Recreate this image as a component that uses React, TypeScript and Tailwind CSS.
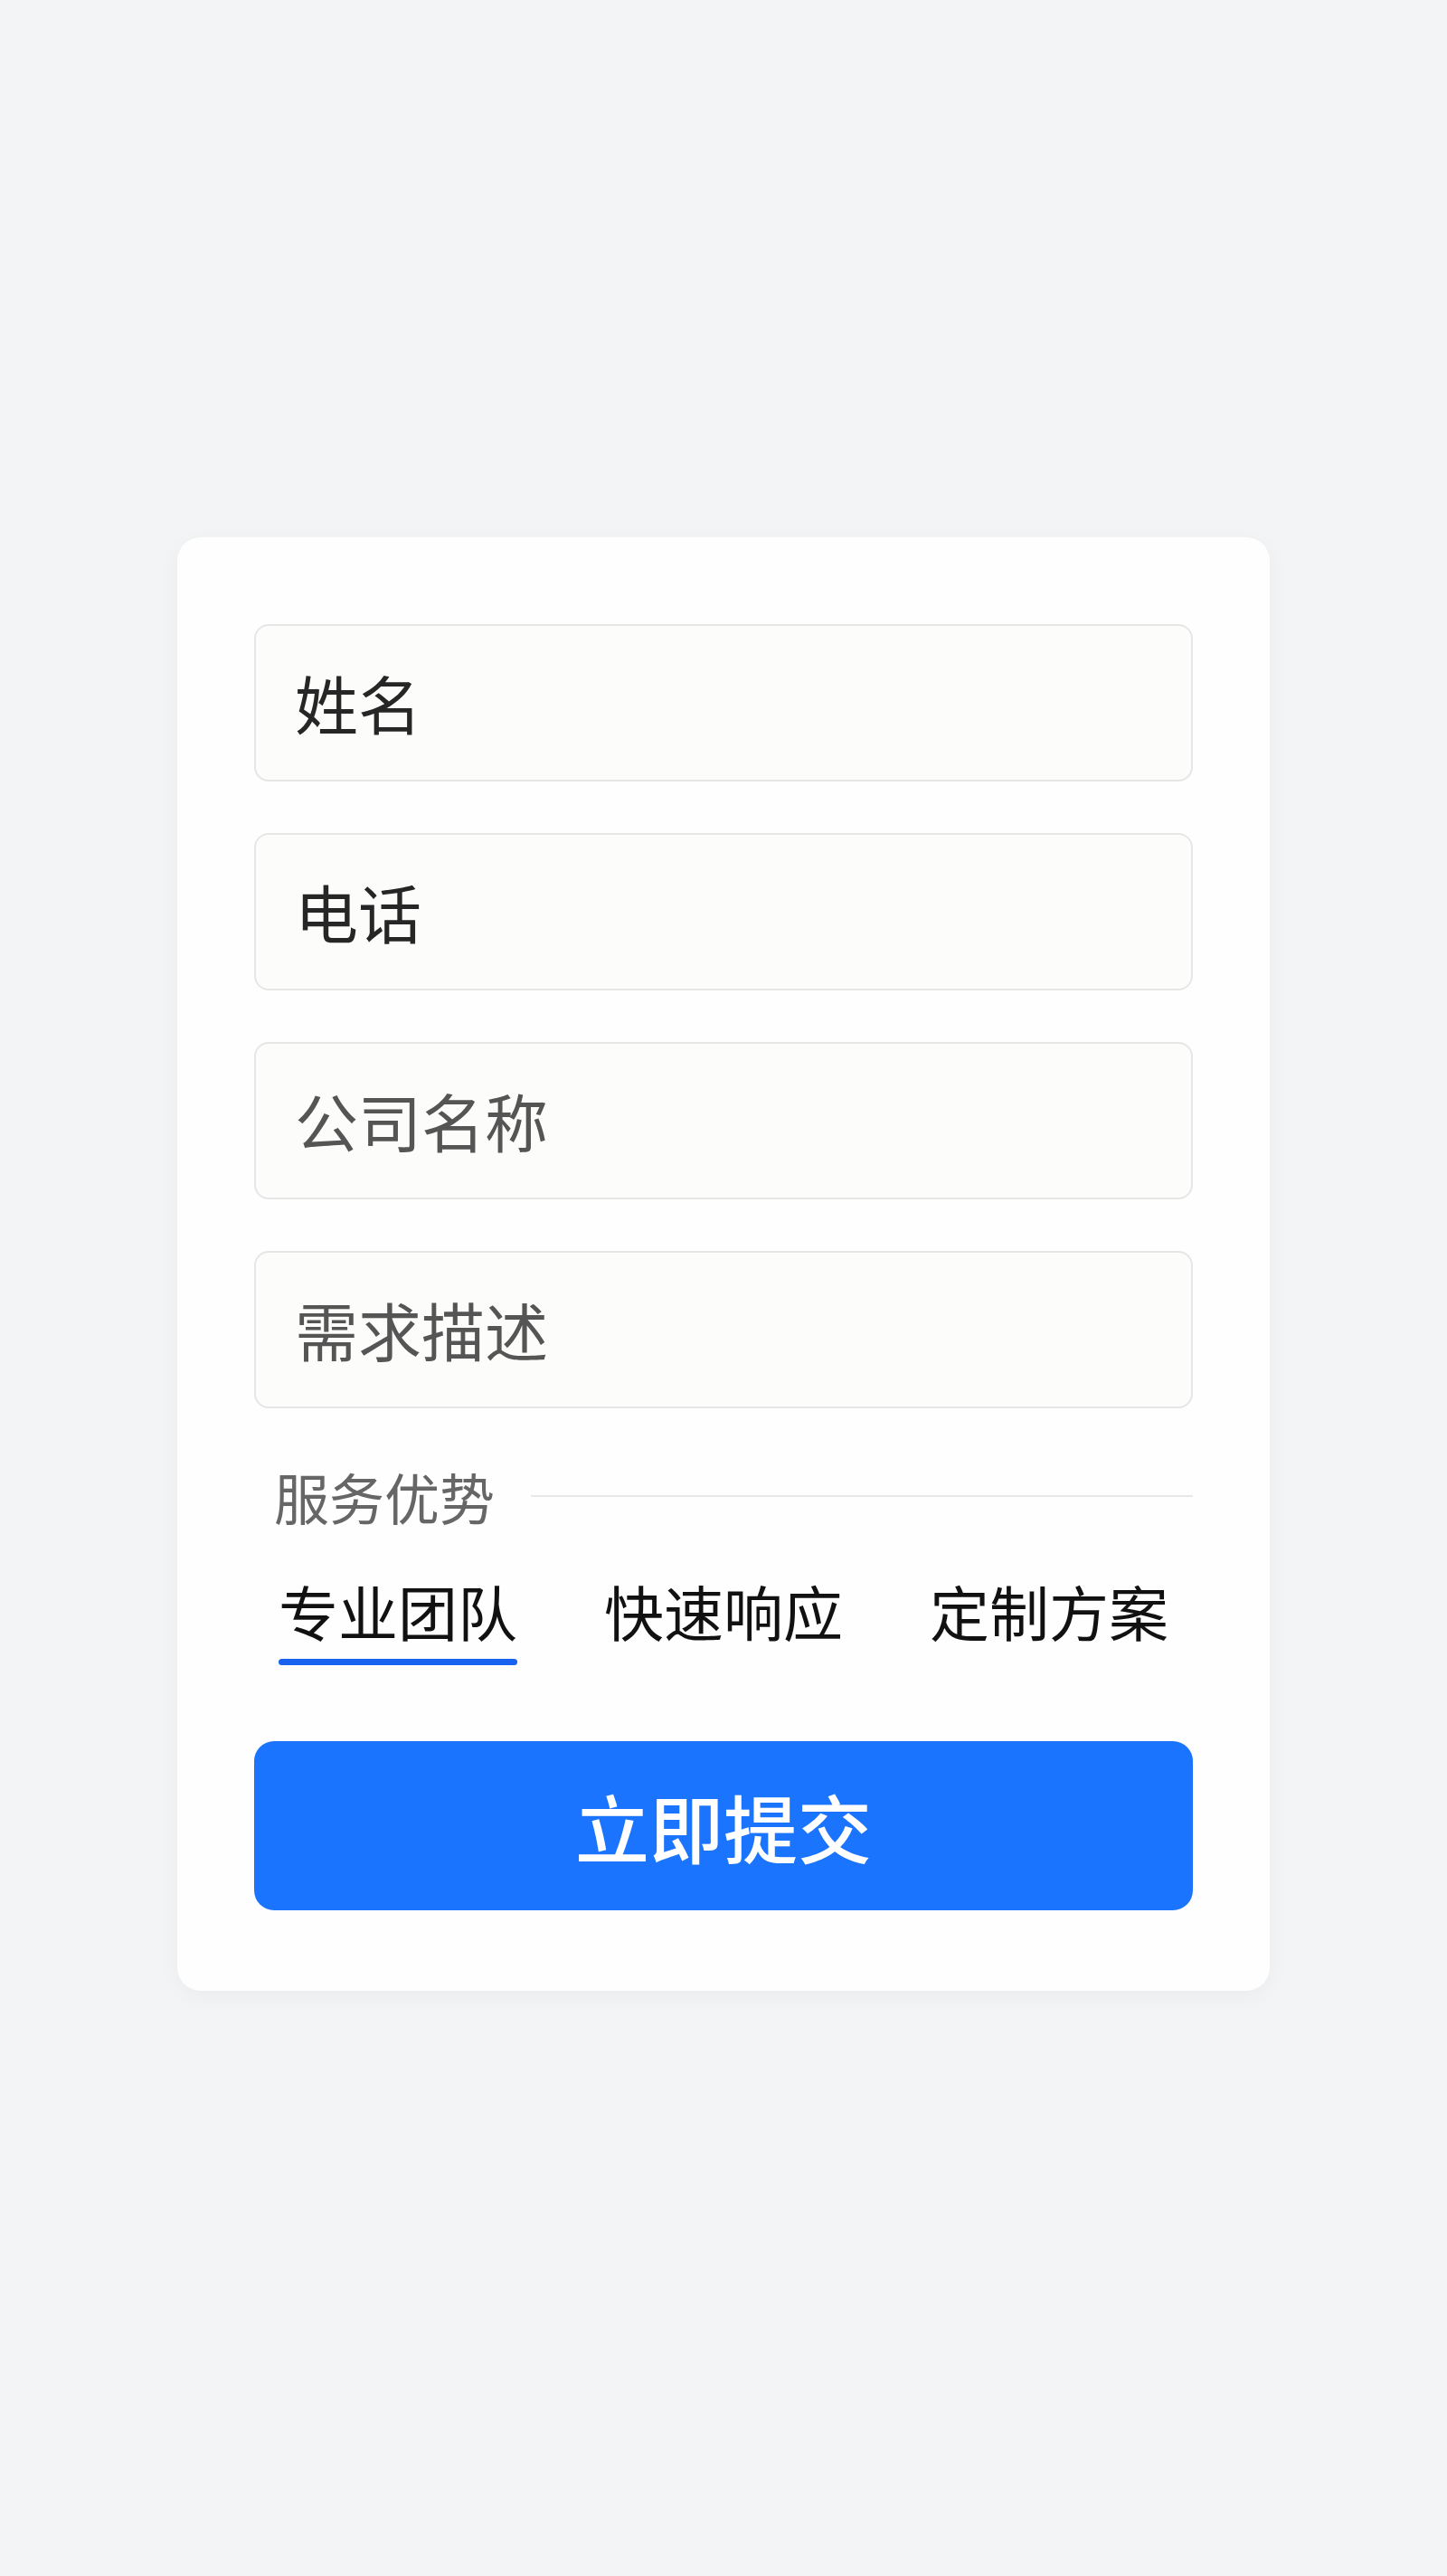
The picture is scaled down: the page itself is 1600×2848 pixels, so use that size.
import React from "react";

const font = { fontFamily: '"Noto Sans CJK SC", "Noto Sans", sans-serif' };

function Field({ label, dark }: { label: string; dark?: boolean }) {
  return (
    <div
      className={`h-[174px] w-full rounded-[16px] border-2 border-[#e6e6e6] bg-[#fcfcfb] flex items-center pl-[43px] text-[70px] leading-none ${
        dark ? "text-[#262626]" : "text-[#555555]"
      }`}
    >
      {label}
    </div>
  );
}

export default function App() {
  return (
    <div className="min-h-[2848px] w-full bg-[#f3f4f6] flex justify-center pt-[594px]" style={font}>
      <div className="w-[1208px] h-[1607px] bg-[#fefefe] rounded-[26px] shadow-[0_6px_24px_rgba(0,0,0,0.04)] px-[85px] pt-[96px] flex flex-col">
        <div className="flex flex-col gap-[57px]">
          <Field label="姓名" dark />
          <Field label="电话" dark />
          <Field label="公司名称" />
          <Field label="需求描述" />
        </div>

        <div className="mt-[62px] flex items-center pl-[22px] h-[70px]">
          <span className="text-[61px] leading-none text-[#666666] whitespace-nowrap">服务优势</span>
          <div className="ml-[40px] flex-1 h-[2px] bg-[#e8e8e8]" />
        </div>

        <div className="mt-[58px] flex pl-[27px] gap-[96px]">
          <div className="flex flex-col items-center">
            <span className="text-[66px] leading-none text-[#111111] whitespace-nowrap">专业团队</span>
            <div className="mt-[21px] h-[7px] w-full rounded-full bg-[#1763f0]" />
          </div>
          <div className="flex flex-col items-center">
            <span className="text-[66px] leading-none text-[#111111] whitespace-nowrap">快速响应</span>
          </div>
          <div className="flex flex-col items-center">
            <span className="text-[66px] leading-none text-[#111111] whitespace-nowrap">定制方案</span>
          </div>
        </div>

        <button className="mt-[84px] h-[187px] w-full rounded-[22px] bg-[#1a74fd] text-white text-[82px] font-medium leading-none flex items-center justify-center">
          立即提交
        </button>
      </div>
    </div>
  );
}
